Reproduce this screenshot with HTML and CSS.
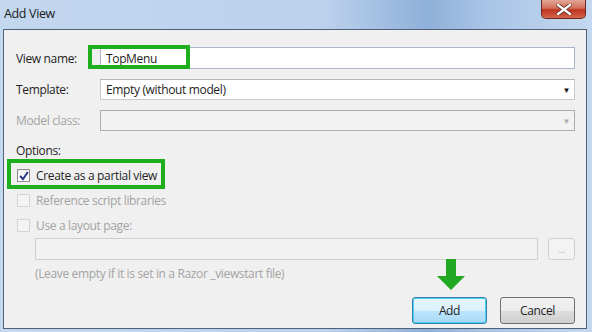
FILE: index.html
```html
<!DOCTYPE html>
<html lang="en">
<head>
  <meta charset="UTF-8">
  <title>Add View</title>
  <link rel="stylesheet" href="styles.css">
</head>
<body>
  <div class="window">
    <div class="titlebar">
      <span class="title">Add View</span>
      <div class="close">
        <svg width="16" height="11" viewBox="0 0 16 11">
          <path d="M2 1 L14 10 M14 1 L2 10" stroke="#5b2219" stroke-width="4" stroke-linecap="square"/>
          <path d="M2 1 L14 10 M14 1 L2 10" stroke="#fff" stroke-width="2.4" stroke-linecap="square"/>
        </svg>
      </div>
    </div>

    <div class="client">
      <div class="form">
        <label class="lbl">View name:</label>
        <div class="field name-field">
          <div class="box">TopMenu</div>
          <div class="mark mark-name"></div>
        </div>

        <label class="lbl">Template:</label>
        <div class="box combo">Empty (without model)<span class="drop">&#9660;</span></div>

        <label class="lbl disabled">Model class:</label>
        <div class="box combo off"><span class="drop grey">&#9660;</span></div>
      </div>

      <div class="options">Options:</div>

      <div class="check-row partial">
        <span class="chk on">
          <svg width="10" height="10" viewBox="0 0 10 10"><path d="M1.2 5 L4 8.2 L8.8 1" fill="none" stroke="#26368a" stroke-width="2"/></svg>
        </span>
        <span>Create as a partial view</span>
        <div class="mark mark-partial"></div>
      </div>
      <div class="check-row disabled">
        <span class="chk"></span>
        <span>Reference script libraries</span>
      </div>
      <div class="check-row disabled">
        <span class="chk"></span>
        <span>Use a layout page:</span>
      </div>

      <div class="layout-row">
        <div class="box off wide"></div>
        <div class="browse">...</div>
      </div>
      <div class="hint">(Leave empty if it is set in a Razor _viewstart file)</div>

      <div class="buttons">
        <div class="btn default">
          Add
          <svg class="arrow" width="30" height="32" viewBox="0 0 30 32">
            <path d="M10 0 H20 V17 H29 L15 31 L1 17 H10 Z" fill="#23a823"/>
          </svg>
        </div>
        <div class="btn">Cancel</div>
      </div>
    </div>
  </div>
</body>
</html>
```

FILE: styles.css
```css
body {
  margin: 0;
  font-family: "Open Sans", "Noto Sans", sans-serif;
  font-size: 12px;
  letter-spacing: -0.35px;
  color: #1e1e1e;
  background: #b9cfea;
}

.window {
  width: 592px;
  height: 332px;
  box-sizing: border-box;
  padding: 0 5px 3px 3px;
  background: linear-gradient(to right, #c3d7ef 0%, #bbd1ec 55%, #8fb0d9 72%, #a9c4e6 82%, #c4d8ef 100%);
  display: flex;
  flex-direction: column;
}

/* barra de titulo */
.titlebar {
  height: 29px;
  position: relative;
}

.title {
  position: absolute;
  left: 1px;
  top: 5px;
  font-size: 12.5px;
  color: #1b1b1b;
}

.close {
  position: absolute;
  left: 538px;
  top: 0;
  width: 45px;
  height: 19px;
  box-sizing: border-box;
  border: 1px solid #6e2a22;
  border-top: none;
  border-radius: 0 0 5px 5px;
  background: linear-gradient(#e2a597 0%, #d4705c 45%, #c0341f 55%, #d5664d 100%);
  display: flex;
  align-items: center;
  justify-content: center;
}

.client {
  flex: 1;
  background: #f0f0f0;
  border: 1px solid #4e6178;
  padding: 0 11px 0 11px;
  position: relative;
}

/* formulario */
.form {
  display: grid;
  grid-template-columns: 85px 1fr;
  row-gap: 10px;
  margin-top: 17px;
  align-items: center;
}

.lbl {
  padding-left: 1px;
}

.disabled {
  color: #a3a3a3;
}

.box {
  height: 22px;
  box-sizing: border-box;
  border: 1px solid #abb7c6;
  background: #fff;
  padding: 0 5px;
  display: flex;
  align-items: center;
  position: relative;
}

.combo {
  height: 21px;
  border-color: #c9c9c9;
  border-top-color: #b5b5b5;
}

.combo.off {
  background: #f2f2f2;
  border-color: #adadad;
}

.drop {
  position: absolute;
  right: 4px;
  top: 4px;
  font-size: 8px;
  color: #111;
}

.drop.grey {
  color: #aaa;
}

.field {
  position: relative;
}

.mark {
  position: absolute;
  border: 4px solid #1eae1e;
  pointer-events: none;
}

.mark-name {
  left: -12px;
  top: -2px;
  width: 94px;
  height: 16px;
}

.options {
  margin-top: 12px;
  padding-left: 1px;
  line-height: 16px;
}

.check-row {
  display: flex;
  align-items: center;
  gap: 6px;
  height: 25px;
  padding-left: 2px;
  position: relative;
}

.check-row.partial {
  margin-top: 4px;
}

.chk {
  width: 13px;
  height: 13px;
  box-sizing: border-box;
  border: 1px solid #d5d5d5;
  background: #f4f4f4;
  display: flex;
  align-items: center;
  justify-content: center;
}

.chk.on {
  border-color: #8f8f8f;
  background: linear-gradient(#f0f0f0, #fff);
}

.mark-partial {
  left: -8px;
  top: -4px;
  width: 150px;
  height: 22px;
}

.layout-row {
  display: flex;
  gap: 10px;
  margin-top: 0;
  padding-left: 20px;
}

.wide {
  flex: 1;
  background: #f2f2f2;
  border-color: #cfcfcf;
}

.browse {
  width: 27px;
  height: 22px;
  box-sizing: border-box;
  border: 1px solid #cfcfcf;
  border-radius: 3px;
  background: #f3f3f3;
  color: #b0b0b0;
  font-size: 9px;
  display: flex;
  align-items: center;
  justify-content: center;
}

.hint {
  padding-left: 20px;
  margin-top: 5px;
  color: #a3a3a3;
}

.buttons {
  display: flex;
  justify-content: flex-end;
  gap: 13px;
  margin-top: 15px;
}

.btn {
  width: 75px;
  height: 27px;
  box-sizing: border-box;
  border: 1px solid #707070;
  border-radius: 3px;
  background: linear-gradient(#f2f2f2 0%, #ebebeb 50%, #dddddd 51%, #cfcfcf 100%);
  display: flex;
  align-items: center;
  justify-content: center;
  position: relative;
}

.btn.default {
  border-color: #3c7fb1;
  box-shadow: inset 0 0 0 1px #48d0f0;
  background: linear-gradient(#eaf6fd 0%, #d9f0fc 50%, #bee6fd 51%, #a7d9f5 100%);
}

.arrow {
  position: absolute;
  left: 23px;
  top: -39px;
}
```
